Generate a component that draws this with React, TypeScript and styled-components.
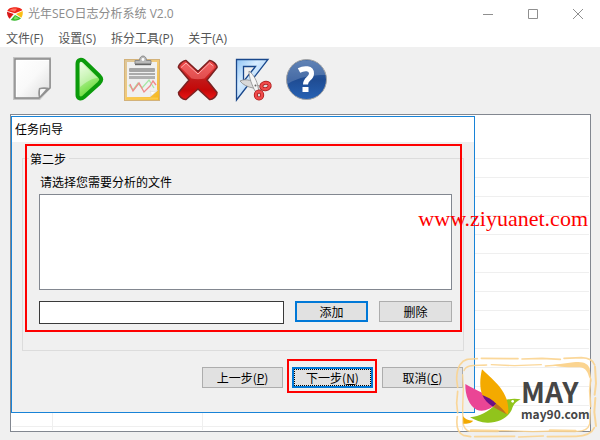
import React from "react";
import styled, { createGlobalStyle, css } from "styled-components";

const GlobalStyle = createGlobalStyle`
  *, *::before, *::after { box-sizing: border-box; }
  body {
    margin: 0;
    background: #f0f0f0;
    color: #000;
    font: 12px/16px "Open Sans", "Noto Sans CJK SC", sans-serif;
  }
  button, input, select { font: inherit; }
`;

const cjk = `"Noto Sans CJK SC", sans-serif`;

const Window = styled.div`
  position: relative;
  display: flex;
  flex-direction: column;
  min-height: 100vh;
  padding-bottom: 8px;
  overflow: hidden;
`;

const TitleBar = styled.header`
  display: flex;
  align-items: center;
  gap: 5px;
  height: 27px;
  padding-left: 7px;
  background: #fff;
  color: #8c8c8c;
`;

const AppTitle = styled.h1`
  flex: 1;
  margin: 0;
  font-size: 12px;
  font-weight: 400;
`;

const CaptionButton = styled.button`
  display: grid;
  place-items: center;
  width: 45px;
  height: 26px;
  margin-left: -5px;
  padding: 0;
  border: 0;
  background: none;
  color: #8f8f8f;
`;

const MenuBar = styled.nav`
  display: flex;
  gap: 15px;
  height: 20px;
  padding: 3px 6px 0;
  background: #fff;
`;

const MenuItem = styled.button`
  padding: 0;
  border: 0;
  background: none;
  color: #555;
  line-height: 16px;
  white-space: nowrap;
`;

const ToolBar = styled.div`
  display: flex;
  gap: 7px;
  padding: 8px 8px 11px;
`;

const ToolButton = styled.button`
  width: 48px;
  height: 48px;
  padding: 0;
  border: 0;
  background: none;

  svg { display: block; }
`;

const ListPanel = styled.main`
  position: relative;
  flex: 1;
  margin: 0 9px 0 10px;
  padding: 0 1px 1px;
  border: 1px solid #828790;
  background: #fff;
`;

const LogTable = styled.table`
  width: 100%;
  table-layout: fixed;
  border-collapse: separate;
  border-spacing: 0;

  th, td {
    height: 19px;
    padding: 0;
    border-bottom: 1px solid #efefef;
  }
  th { height: 44px; }
  td:not(:last-child) { border-right: 1px solid #efefef; }
  tfoot td { height: 21px; }
  tfoot tr:last-child td { height: 3px; border-bottom: 0; }
`;

const Dialog = styled.section`
  position: absolute;
  top: 1px;
  left: 0;
  width: calc(100% - 115px);
  border: 1px solid #1883d7;
  background: #f0f0f0;
  font-family: ${cjk};
`;

const DialogTitle = styled.h2`
  height: 25px;
  margin: 0;
  padding: 0 3px;
  background: #fff;
  font-size: 12px;
  font-weight: 400;
  line-height: 23px;
`;

const DialogBody = styled.form`
  padding: 8px 10px 24px;
`;

const StepArea = styled.div`
  position: relative;
`;

const Step = styled.fieldset`
  min-width: 0;
  margin: 0;
  padding: 6px 11px 26px 16px;
  border: 1px solid #dcdcdc;

  legend {
    height: 17px;
    margin-left: -10px;
    padding: 0 3px 0 1px;
    line-height: 18px;
  }
`;

const FieldLabel = styled.label`
  display: block;
  padding: 0 1px 3px;
  line-height: 18px;
`;

const FileList = styled.select`
  display: block;
  width: 100%;
  height: 96px;
  border: 1px solid #828790;
  border-radius: 0;
  background: #fff;
  outline: 0;
`;

const AddRow = styled.div`
  display: flex;
  align-items: flex-start;
  gap: 11px;
  margin-top: 11px;
`;

const PathInput = styled.input`
  flex: 1;
  min-width: 0;
  height: 23px;
  padding: 0 3px;
  border: 1px solid #3a3a3a;
  border-radius: 0;
  background: #fff;
  outline: 0;
`;

const PushButton = styled.button<{ $wide?: boolean; $primary?: boolean; $focused?: boolean }>`
  display: flex;
  align-items: center;
  justify-content: center;
  width: ${(p) => (p.$wide ? 81 : 73)}px;
  height: 21px;
  padding: 0;
  border: ${(p) => (p.$primary ? "2px solid #0078d7" : "1px solid #adadad")};
  background: #e1e1e1;
  color: #000;
  white-space: nowrap;
  ${(p) =>
    p.$focused &&
    css`
      outline: 1px dotted #000;
      outline-offset: -3px;
    `}
`;

const Footer = styled.footer`
  display: flex;
  justify-content: flex-end;
  gap: 9px;
  margin-top: 16px;
  padding-right: 1px;
`;

const NextArea = styled.div`
  position: relative;
`;

const Highlight = styled.span<{ $inset: string }>`
  position: absolute;
  inset: ${(p) => p.$inset};
  border: 2px solid #fe0000;
  pointer-events: none;
`;

const SiteMark = styled.div`
  position: absolute;
  top: 206px;
  right: 12px;
  color: #fe0000;
  font: 22px/26px "Liberation Serif", serif;
`;

const Stamp = styled.div`
  position: absolute;
  right: 0;
  bottom: 0;
  width: 160px;
  height: 100px;
  padding: 37px 0 0 81px;
  color: #464646;
  font-family: ${cjk};
  font-weight: 700;

  svg {
    position: absolute;
    inset: 0;
  }
`;

const StampName = styled.div`
  position: relative;
  font-size: 28px;
  line-height: 29px;
`;

const StampSite = styled.div`
  position: relative;
  font-size: 12px;
  line-height: 16px;
`;

const PieLogo = () => (
  <svg width="16" height="16" viewBox="0 -3 48 48" aria-hidden="true">
    <path d="M1 12C4 4 14 1 24 1s20 3 22 9L24 19z" fill="#ee2418" />
    <path d="M7 10C12 4 22 4 30 5l-6 9z" fill="#ff7161" />
    <path d="M0 14l20 7L8 35C2 29 0 22 0 14z" fill="#d81818" />
    <path d="M27 21l20-9c1 8 0 14-4 20z" fill="#fbbf14" />
    <path d="M24 24l18 10c-6 7-20 9-31 5z" fill="#35b82b" />
    <path d="M24 27l12 7c-4 3-10 4-16 3z" fill="#7fe05f" />
  </svg>
);

const PageIcon = () => (
  <svg width="48" height="48" viewBox="0 0 48 48">
    <defs>
      <linearGradient id="sheet" x1="0" y1="0" x2="1" y2="1">
        <stop offset="0" stopColor="#fff" />
        <stop offset=".5" stopColor="#f9f9f9" />
        <stop offset="1" stopColor="#dcdcdc" />
      </linearGradient>
    </defs>
    <path d="M5 2h38v31L32 45H5z" fill="#c4c4c4" />
    <path d="M7 4h35v29L31 43H7z" fill="url(#sheet)" stroke="#888" strokeWidth="1.4" />
    <path d="M8.500 42V5.500H41" fill="none" stroke="#fff" />
    <path d="M31 43c-1-3-1-7 0-10 3-1 7-1 11 0z" fill="#929292" />
    <path d="M32 41v-6.500c2-.6 4-.5 6-.3z" fill="#f6f6f6" />
  </svg>
);

const PlayIcon = () => (
  <svg width="48" height="48" viewBox="0 0 48 48">
    <defs>
      <linearGradient id="go" x1="0" y1="0" x2=".4" y2="1">
        <stop offset="0" stopColor="#f2ffec" />
        <stop offset=".45" stopColor="#b7f29b" />
        <stop offset="1" stopColor="#5fd82c" />
      </linearGradient>
    </defs>
    <path
      d="M14.500 9C14.500 4.500 18 4 21 6L36 20.500C39 23.500 39 25.500 36 28.500L21 42C18 44.500 14.500 43.500 14.500 40z"
      fill="url(#go)"
      stroke="#0b9b0b"
      strokeWidth="4"
      strokeLinejoin="round"
    />
    <path d="M17 24V10c0-2 1-2 2-1l16 14c-6 0-12 4-18 9z" fill="#fff" opacity=".35" />
  </svg>
);

const ClipboardIcon = () => (
  <svg width="48" height="48" viewBox="0 0 48 48">
    <defs>
      <linearGradient id="board" x1="0" y1="0" x2="1" y2="1">
        <stop offset="0" stopColor="#dcc69c" />
        <stop offset=".5" stopColor="#f2ca78" />
        <stop offset="1" stopColor="#f7b616" />
      </linearGradient>
    </defs>
    <rect x="6.500" y="4.500" width="35" height="41" fill="url(#board)" stroke="#d3b27a" />
    <path d="M8 43.500h32" stroke="#fbc94b" strokeWidth="2" />
    <path d="M9 7h30v29l-7 6H9z" fill="#f0f0f0" />
    <path d="M32 42c2-2 1-4 0-6 2 1 5 1 8-1z" fill="#fff" stroke="#d2cfc8" strokeWidth=".5" />
    <path d="M17 9V5.500h4.500c0-6 7-6 7 0H33V9z" fill="#b9b9b9" stroke="#8b8b8b" />
    <circle cx="25" cy="4.500" r="1.400" fill="#fff" />
    <path d="M17 9.500h16" stroke="#666" strokeWidth="1.400" />
    <rect x="11" y="13" width="26" height="4" rx="1" fill="#a5a5a5" />
    <rect x="11" y="18" width="26" height="2" fill="#ababab" />
    <rect x="11" y="21" width="26" height="3" fill="#b0b0b0" />
    <path d="M11 30l4 5 5-7 4 5 7-8 5 8" fill="none" stroke="#a5e8a5" strokeWidth="1.300" />
    <path d="M12 29l3 7 6-8 5 9 6-6 3-5 3 4" fill="none" stroke="#f08a8a" strokeWidth="1.300" />
  </svg>
);

const DeleteIcon = () => (
  <svg width="48" height="48" viewBox="0 0 48 48">
    <defs>
      <linearGradient id="cross" x1="0" y1="0" x2="0" y2="1">
        <stop offset="0" stopColor="#f04848" />
        <stop offset=".5" stopColor="#c21818" />
        <stop offset=".75" stopColor="#c40808" />
        <stop offset="1" stopColor="#ed1515" />
      </linearGradient>
    </defs>
    <path
      d="M13 5.500L25 16.500 36.500 5.500C39 5 44.500 10 44 12.500L34 25l10 12.500c.5 3-4.500 7.500-7.500 7L25 34 13 44.500c-3 .5-8-4-7.500-7L16 25 5.500 12.500C5 10 10.500 5 13 5.500z"
      fill="url(#cross)"
      stroke="#7b2222"
      strokeWidth="1.600"
      strokeLinejoin="round"
    />
    <path d="M13 8l12 11L36.500 8l5 4.500-10 11c-4 1-9 1-13 0L8 12.500z" fill="#ff8a8a" opacity=".45" />
    <path d="M8 12.500L13 8l12 11L36.500 8l4 3" fill="none" stroke="#ffb1b1" strokeWidth="1" />
  </svg>
);

const CutIcon = () => (
  <svg width="48" height="48" viewBox="0 0 48 48">
    <defs>
      <linearGradient id="ruler" x1="0" y1="0" x2="1" y2="1">
        <stop offset="0" stopColor="#8fc4f5" />
        <stop offset=".35" stopColor="#d6ecff" />
        <stop offset="1" stopColor="#86b9ee" />
      </linearGradient>
    </defs>
    <path
      d="M8.500 4.500h31.500L8.500 45zM15.500 11.500v15L27.500 11.500z"
      fill="url(#ruler)"
      fillRule="evenodd"
      stroke="#19478b"
      strokeWidth="1.300"
    />
    <path d="M12 26c6-3 14 0 17 4l5 2-3 4-6-3c-5-1-10-3-13-7z" fill="#d9d9d9" stroke="#8a8a8a" strokeWidth=".8" />
    <path d="M21 16c5 4 8 10 9 16l1 5-4-1c-3-6-6-13-6-20z" fill="#f5f5f5" stroke="#8a8a8a" strokeWidth=".8" />
    <ellipse cx="37.500" cy="31" rx="4.200" ry="3.200" transform="rotate(-15 37.500 31)" fill="#ddd" stroke="#a71818" strokeWidth="4" />
    <ellipse cx="37.500" cy="31" rx="4.200" ry="3.200" transform="rotate(-15 37.500 31)" fill="none" stroke="#ef4b4b" strokeWidth="2.500" />
    <ellipse cx="31" cy="40" rx="3.200" ry="3.600" fill="#ddd" stroke="#a71818" strokeWidth="4" />
    <ellipse cx="31" cy="40" rx="3.200" ry="3.600" fill="none" stroke="#ef4b4b" strokeWidth="2.500" />
    <circle cx="27.500" cy="30.500" r="1" fill="#666" />
  </svg>
);

const HelpIcon = () => (
  <svg width="48" height="48" viewBox="0 0 48 48">
    <defs>
      <linearGradient id="ball" x1="0" y1="0" x2="0" y2="1">
        <stop offset="0" stopColor="#3f69a6" />
        <stop offset=".5" stopColor="#1f4c93" />
        <stop offset="1" stopColor="#2762b4" />
      </linearGradient>
    </defs>
    <circle cx="23.500" cy="24.500" r="20" fill="url(#ball)" stroke="#a3a3a3" />
    <path d="M4.500 29C2 14 12 5.500 23.500 5.500S42 13 42.500 20C28 20 16 22 4.500 29z" fill="#fff" opacity=".18" />
    <path d="M16 15.500c5.500-3 12.500-2.500 12.500 3 0 5.500-6 5-6 11" fill="none" stroke="#fff" strokeWidth="5" />
    <rect x="19.500" y="32" width="6" height="5" fill="#fff" />
  </svg>
);

const StampArt = () => (
  <svg width="160" height="100" viewBox="0 0 480 300" aria-hidden="true">
    <g fill="none" stroke="#fbd490" strokeLinecap="round" strokeLinejoin="round" opacity=".9">
      <path d="M62 72C72 56 88 57 112 56M124 55l110 1M246 57l60-2 55 3M372 55l52-2c22 1 36 7 40 22" strokeWidth="5" />
      <path d="M60 74C50 90 50 104 50 118l3 24M53 154l-3 35 3 30M52 230c-4 26 2 48 18 56l22 4M104 290l120-1M236 291l74-3M322 290l86-1c32-1 48-10 55-26" strokeWidth="5" />
      <path d="M465 80l3 50-4 34M466 174l-3 42 5 42" strokeWidth="6" />
      <path d="M72 92C80 72 106 77 140 75M154 74l70 3 80-3M316 78l60-4" strokeWidth="4" />
      <path d="M68 104l2 40-2 60 1 45c3 15 8 23 20 25l98-2 92 3 72-2 60 1c24 0 34-7 38-22l2-44" strokeWidth="4" />
      <path d="M93 272l80 1M330 272l76 1" strokeWidth="8" />
      <path d="M452 200l-3-48 3-35" strokeWidth="5" />
    </g>
    <path d="M338 75l62-8c30-5 45 5 49 18l6 42-8-16c-4-19-14-28-28-29-26-2-52 3-81-7z" fill="#fbd490" />
    <path d="M69 228c5 8 14 13 30 14-3 6-15 10-29 9z" fill="#f2a900" />
    <path d="M76 132c20 13 75 34 93 58-17 20-43 27-59 19-22-11-35-43-34-77z" fill="#ea4595" />
    <path d="M90 232c29-2 56-18 75-37 20-15 48-22 77-17-15 8-21 15-26 29-11 28-44 42-74 41-20 0-36-7-52-16z" fill="#91c41c" />
    <path d="M126 88c26 27 88 67 78 135-35-16-67-36-77-58-10-24-6-56-1-77z" fill="#f4aa00" />
    <path d="M127 165c15 6 31 14 42 26l-10 9c-15-9-26-20-32-35z" fill="#6d0f86" />
    <path d="M169 191c12 8 22 19 31 32l-39-21z" fill="#b97320" />
    <circle cx="218" cy="184" r="4" fill="#fff" />
  </svg>
);

const menus = ["文件(F)", "设置(S)", "拆分工具(P)", "关于(A)"];

const tools = [
  { name: "新建", Icon: PageIcon },
  { name: "开始", Icon: PlayIcon },
  { name: "报告", Icon: ClipboardIcon },
  { name: "删除任务", Icon: DeleteIcon },
  { name: "拆分", Icon: CutIcon },
  { name: "帮助", Icon: HelpIcon },
];

const captions = [
  { name: "最小化", d: "M0 5.5h10" },
  { name: "最大化", d: "M.5.5h9v9h-9z" },
  { name: "关闭", d: "M0 0l10 10M10 0L0 10" },
];

const Cells = () => (
  <tr>
    <td />
    <td />
    <td />
    <td />
  </tr>
);

export default function App() {
  return (
    <Window>
      <GlobalStyle />
      <TitleBar>
        <PieLogo />
        <AppTitle>光年SEO日志分析系统 V2.0</AppTitle>
        {captions.map((c) => (
          <CaptionButton key={c.name} type="button" aria-label={c.name}>
            <svg width="10" height="10" viewBox="0 0 10 10">
              <path d={c.d} fill="none" stroke="currentColor" />
            </svg>
          </CaptionButton>
        ))}
      </TitleBar>
      <MenuBar>
        {menus.map((m) => (
          <MenuItem key={m} type="button">{m}</MenuItem>
        ))}
      </MenuBar>
      <ToolBar role="toolbar">
        {tools.map(({ name, Icon }) => (
          <ToolButton key={name} type="button" aria-label={name}>
            <Icon />
          </ToolButton>
        ))}
      </ToolBar>

      <ListPanel>
        <LogTable>
          <colgroup>
            <col width="41" />
            <col width="150" />
            <col width="260" />
            <col />
          </colgroup>
          <thead>
            <tr><th colSpan={4} /></tr>
          </thead>
          <tbody>
            {Array.from({ length: 13 }, (_, i) => <Cells key={i} />)}
          </tbody>
          <tfoot>
            <Cells />
            <Cells />
          </tfoot>
        </LogTable>

        <Dialog role="dialog" aria-labelledby="wizard-title">
          <DialogTitle id="wizard-title">任务向导</DialogTitle>
          <DialogBody>
            <StepArea>
              <Step>
                <legend>第二步</legend>
                <FieldLabel htmlFor="files">请选择您需要分析的文件</FieldLabel>
                <FileList id="files" multiple />
                <AddRow>
                  <PathInput type="text" aria-label="文件路径" />
                  <PushButton type="button" $primary>添加</PushButton>
                  <PushButton type="button">删除</PushButton>
                </AddRow>
              </Step>
              <Highlight $inset="-6px 2px 19px 3px" />
            </StepArea>
            <Footer>
              <PushButton type="button" $wide>上一步(<u>P</u>)</PushButton>
              <NextArea>
                <PushButton type="button" $wide $primary $focused>下一步(<u>N</u>)</PushButton>
                <Highlight $inset="-8px -4px -5px -5px" />
              </NextArea>
              <PushButton type="button" $wide>取消(<u>C</u>)</PushButton>
            </Footer>
          </DialogBody>
        </Dialog>
      </ListPanel>

      <SiteMark>www.ziyuanet.com</SiteMark>
      <Stamp>
        <StampArt />
        <StampName>MAY</StampName>
        <StampSite>may90.com</StampSite>
      </Stamp>
    </Window>
  );
}
